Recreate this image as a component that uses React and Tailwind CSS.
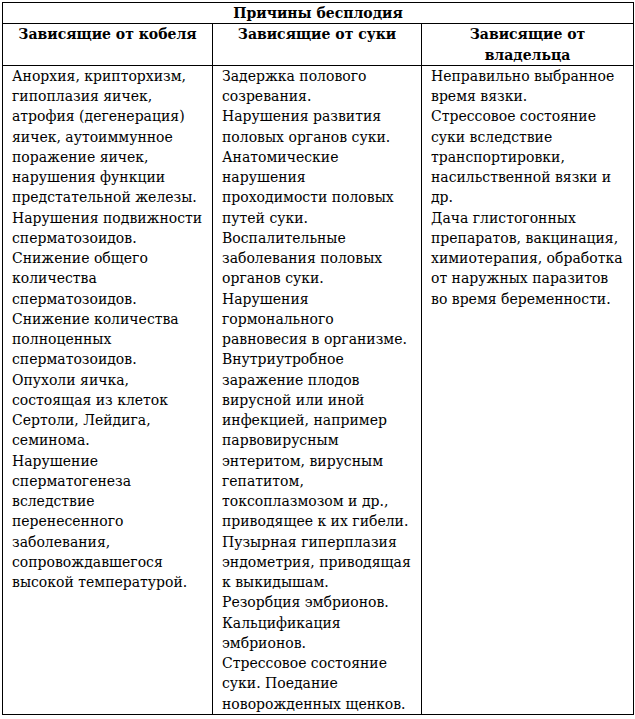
import React from 'react';

const columns = [
  {
    title: ['Зависящие от кобеля'],
    items: [
      ['Анорхия, крипторхизм,', 'гипоплазия яичек,', 'атрофия (дегенерация)', 'яичек, аутоиммунное', 'поражение яичек,', 'нарушения функции', 'предстательной железы.'],
      ['Нарушения подвижности', 'сперматозоидов.'],
      ['Снижение общего', 'количества', 'сперматозоидов.'],
      ['Снижение количества', 'полноценных', 'сперматозоидов.'],
      ['Опухоли яичка,', 'состоящая из клеток', 'Сертоли, Лейдига,', 'семинома.'],
      ['Нарушение', 'сперматогенеза', 'вследствие', 'перенесенного', 'заболевания,', 'сопровождавшегося', 'высокой температурой.'],
    ],
  },
  {
    title: ['Зависящие от суки'],
    items: [
      ['Задержка полового', 'созревания.'],
      ['Нарушения развития', 'половых органов суки.'],
      ['Анатомические', 'нарушения', 'проходимости половых', 'путей суки.'],
      ['Воспалительные', 'заболевания половых', 'органов суки.'],
      ['Нарушения', 'гормонального', 'равновесия в организме.'],
      ['Внутриутробное', 'заражение плодов', 'вирусной или иной', 'инфекцией, например', 'парвовирусным', 'энтеритом, вирусным', 'гепатитом,', 'токсоплазмозом и др.,', 'приводящее к их гибели.'],
      ['Пузырная гиперплазия', 'эндометрия, приводящая', 'к выкидышам.'],
      ['Резорбция эмбрионов.'],
      ['Кальцификация', 'эмбрионов.'],
      ['Стрессовое состояние', 'суки. Поедание', 'новорожденных щенков.'],
    ],
  },
  {
    title: ['Зависящие от', 'владельца'],
    items: [
      ['Неправильно выбранное', 'время вязки.'],
      ['Стрессовое состояние', 'суки вследствие', 'транспортировки,', 'насильственной вязки и', 'др.'],
      ['Дача глистогонных', 'препаратов, вакцинация,', 'химиотерапия, обработка', 'от наружных паразитов', 'во время беременности.'],
    ],
  },
];

// Liberation Serif here has no Cyrillic, DejaVu Serif does (wider, so a smaller size)
const Lines = ({ lines }) => (
  <div>
    {lines.map((line, i) => (
      <div key={i} className="whitespace-nowrap">{line}</div>
    ))}
  </div>
);

const App = () => {
  return (
    <div className="min-h-[719px] bg-white pl-[2px] pt-[2px] font-['DejaVu_Serif',serif] text-[14px] leading-[20.25px] text-black">
      <table className="w-[631px] table-fixed border-collapse">
        <colgroup>
          <col className="w-[210px]" />
          <col className="w-[209px]" />
          <col className="w-[212px]" />
        </colgroup>
        <thead>
          <tr>
            <th colSpan={3} className="border border-black px-2 text-center font-bold">
              Причины бесплодия
            </th>
          </tr>
          <tr>
            {columns.map((col) => (
              <th key={col.title[0]} className="border border-black px-2 text-center align-top font-bold">
                <Lines lines={col.title} />
              </th>
            ))}
          </tr>
        </thead>
        <tbody>
          <tr>
            {columns.map((col) => (
              <td key={col.title[0]} className="border border-black pl-[9px] pr-1 align-top">
                {col.items.map((item, i) => (
                  <Lines key={i} lines={item} />
                ))}
              </td>
            ))}
          </tr>
        </tbody>
      </table>
    </div>
  );
};

export default App;
